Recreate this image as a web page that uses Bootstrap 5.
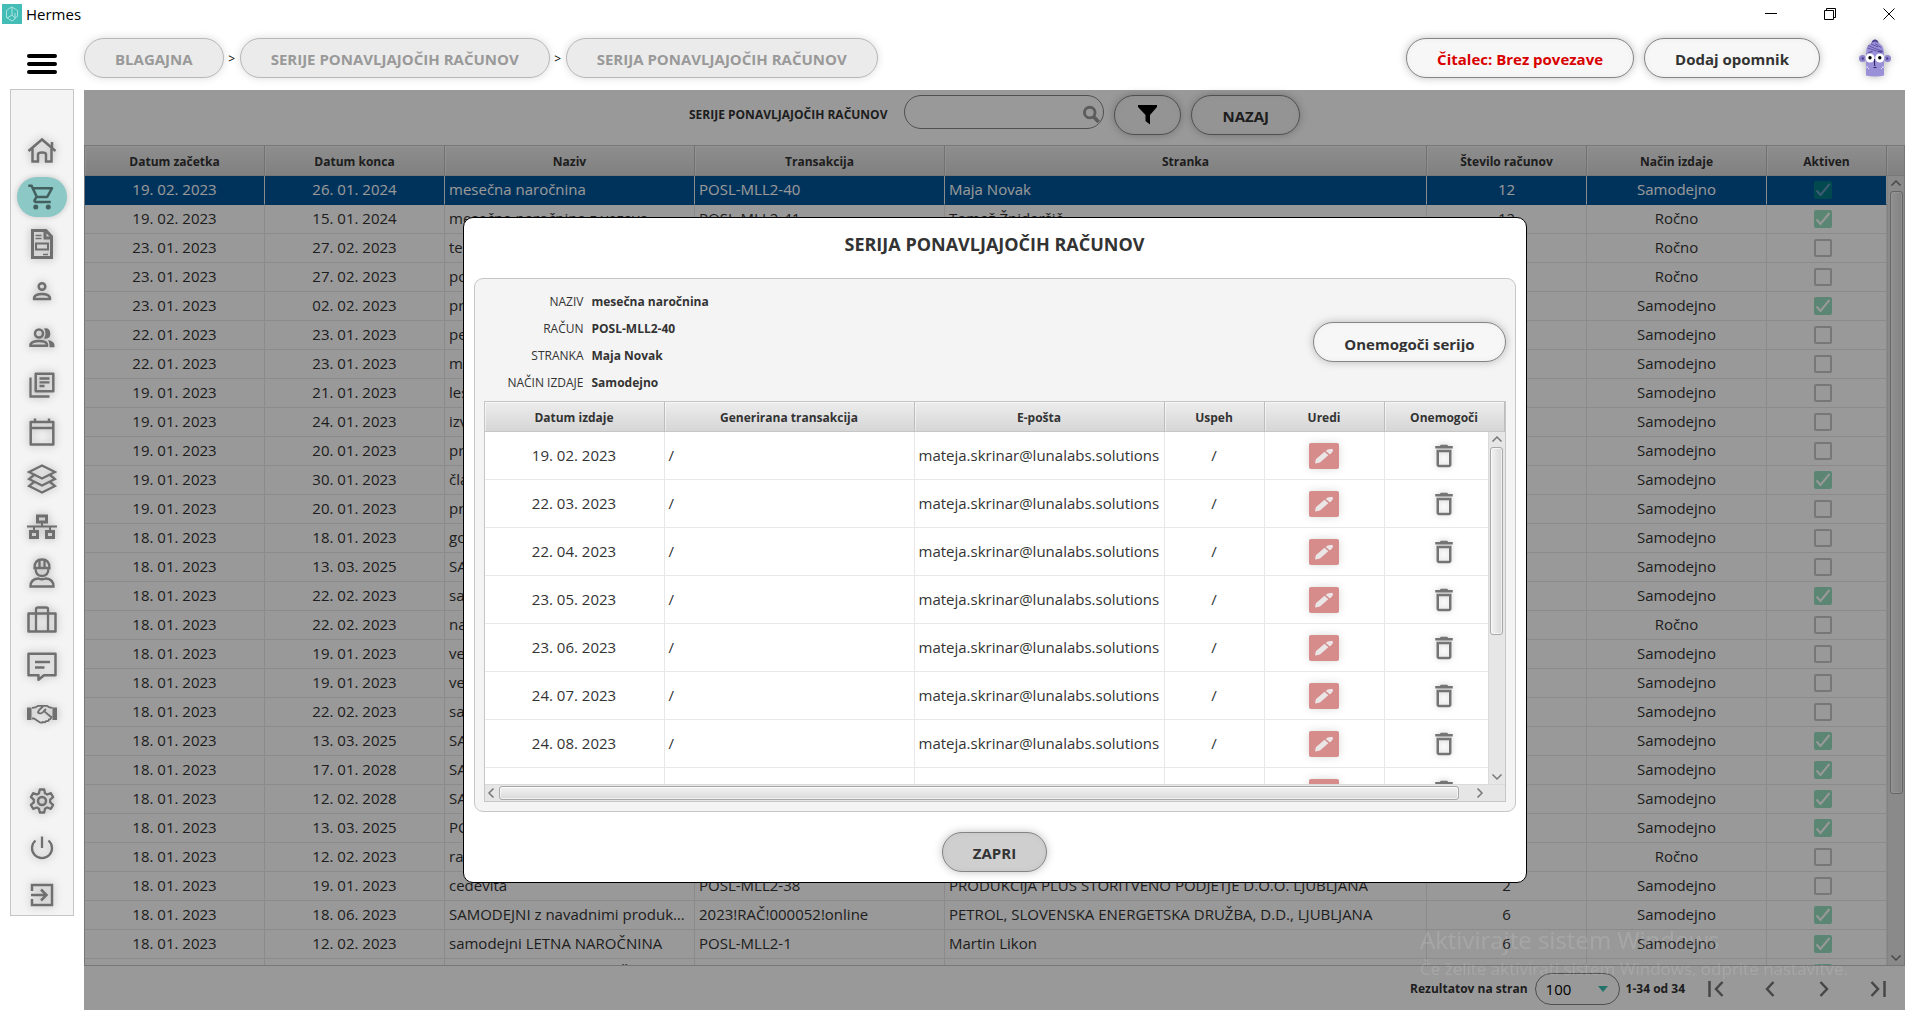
<!DOCTYPE html>
<html lang="sl">
<head>
<meta charset="utf-8">
<meta name="viewport" content="width=device-width, initial-scale=1">
<title>Hermes</title>
<link rel="stylesheet" href="https://cdn.jsdelivr.net/npm/bootstrap@5.3.0/dist/css/bootstrap.min.css">
<style>
:root { --line: #c6c6c6; --grid: #e8e8e8; --ink: #333; --icon: #6f6f6f; }
body { font-family: "Open Sans", "Noto Sans", sans-serif; font-size: 15px; line-height: 20px; color: var(--ink); background: #fff; }
.app-shell { height: 100vh; padding-bottom: 16px; }

/* window title bar */
.win-bar { height: 30px; padding: 0 0 2px 2px; color: #000; }
.win-tools { margin-right: -3px; }
.win-btn { width: 59px; height: 28px; border: 0; background: none; padding: 0; }

/* header */
.head-row { padding: 8px 10px 12px 0; }
.menu-col { width: 84px; flex: none; }
.menu-btn { display: block; border: 0; background: none; padding: 12px 0 0 0; margin-left: 27px; }
.pill { height: 40px; border: 1px solid #858585; border-radius: 20px; background: #f7f7f7; color: var(--ink); font-weight: 700; font-size: 15px; line-height: 20px; padding: 2px 30px 0; box-shadow: 0 0 9px rgba(0,0,0,.25), inset 0 0 6px rgba(0,0,0,.04); white-space: nowrap; }
.pill-off { border-color: #b8b8b8; background: #ebebeb; color: #999; box-shadow: 0 0 9px rgba(0,0,0,.14); }
.pill-alert { color: #d90000; }
.pill-grey { background: #cfcfcf; }
.pill-icon { padding: 0 23px; }
.crumb-sep { width: 16px; text-align: center; font-size: 12px; padding-top: 2px; color: #000; }
.head-tools { gap: 10px; }
.avatar-btn { border: 0; background: none; padding: 0; margin: 0 14px 0 29px; filter: drop-shadow(0 0 4px rgba(0,0,0,.3)); }

/* side menu */
.side-nav { width: 64px; margin: -1px 10px 0; padding-top: 36px; border: 1px solid var(--line); background: #f4f4f4; flex: none; }
.side-link { height: 47px; color: var(--icon); }
.side-link:last-child { margin-bottom: -3px; }
.side-link svg { filter: drop-shadow(0 0 4px rgba(0,0,0,.3)); }
.side-link.is-on span { width: 50px; height: 40px; border-radius: 20px; background: #8bc8c6; color: #43605f; box-shadow: 0 0 6px rgba(0,0,0,.2); }
.side-link.is-on svg { filter: none; }
.side-gap { margin-top: 40px; }

/* main pane */
.pane { background: #fff; min-width: 0; margin-right: 10px; }
.pane-tools { height: 55px; padding-top: 5px; gap: 10px; }
.small-bold { font-size: 12px; font-weight: 700; }
.pane-tools .small-bold { line-height: 40px; margin-right: 7px; }
.find-box { width: 200px; height: 34px; border: 1px solid #858585; border-radius: 17px; overflow: hidden; padding: 0 2px 0 12px; }
.find-box input { border: 0; background: none; min-width: 0; outline: 0; }
.grid-area { border: 1px solid var(--line); min-height: 0; }
.grid-tbl { width: 100%; table-layout: fixed; border-collapse: separate; border-spacing: 0; }
.grid-tbl th { height: 30px; padding: 2px 0 0; text-align: center; font-size: 12px; line-height: 16px; border-right: 1px solid #bdbdbd; border-bottom: 1px solid var(--line); background: linear-gradient(#ededed, #d6d6d6); box-shadow: inset 1px 1px 0 rgba(255,255,255,.5); }
.grid-tbl td { padding: 0 4px 2px; border-right: 1px solid var(--grid); border-bottom: 1px solid var(--grid); white-space: nowrap; overflow: hidden; text-overflow: ellipsis; text-align: center; }
.grid-tbl td.txt { text-align: left; }
.main-tbl td { height: 29px; }
.main-tbl td:last-child { padding: 0 12px 0 4px; }
.main-tbl tr.picked td { background: #00569a; border-bottom-color: #00569a; color: #fff; }
.main-tbl .form-check-input { display: block; width: 18px; height: 18px; margin: 0 auto; border: 2px solid #707070; border-radius: 2px; background-color: transparent; opacity: .4; }
.main-tbl .form-check-input:checked { border-color: #05b365; background-color: #05b365; background-size: 18px; background-position: center; background-image: url("data:image/svg+xml,%3Csvg xmlns='http://www.w3.org/2000/svg' viewBox='0 0 18 18'%3E%3Cpath d='M2.5 9.5l4 4.5 9-11' fill='none' stroke='%23fff' stroke-width='2'/%3E%3C/svg%3E"); }

/* scroll bars */
.vbar { position: absolute; right: 0; width: 17px; background: #e6e6e6; border-left: 1px solid #dadada; padding: 3px 2px; color: #777; }
.hbar { height: 17px; background: #e6e6e6; border-top: 1px solid #dadada; color: #777; padding: 1px 17px 1px 2px; }
.bar-thumb { border: 1px solid #a8a8a8; border-radius: 3px; box-shadow: inset 0 0 0 1px rgba(255,255,255,.6); }
.vbar .bar-thumb { width: 13px; background: linear-gradient(90deg, #f2f2f2, #d9d9d9); }
.hbar .bar-thumb { height: 14px; background: linear-gradient(#f2f2f2, #d9d9d9); }
.main-bar { top: 30px; bottom: 0; }
.main-bar .bar-thumb { height: 77%; }
.dlg-bar { top: 30px; bottom: 0; }
.dlg-bar .bar-thumb { height: 188px; }

.pane-foot { height: 44px; padding-top: 2px; }
.page-size { width: 85px; height: 32px; margin: 0 6px 0 7px; border: 1px solid #858585; border-radius: 16px; appearance: none; padding: 0 10px; color: #000; background: transparent url("data:image/svg+xml,%3Csvg xmlns='http://www.w3.org/2000/svg' viewBox='0 0 10 6'%3E%3Cpath d='M0 0h10L5 6z' fill='%233fbfb1'/%3E%3C/svg%3E") no-repeat right 11px center / 10px 6px; }
.pager-btn { width: 54px; height: 32px; border: 0; background: none; padding: 0; color: #777; }

/* dialog */
.shade { background: rgba(0,0,0,.4); }
.dlg { width: 1064px; max-width: 100%; border: 1px solid #000; border-radius: 10px; background: #fff; padding: 0 10px 10px; }
.dlg-title { font-size: 18px; line-height: 24px; font-weight: 700; text-align: center; padding: 14px 0 22px; margin: 0; }
.dlg-body { border: 1px solid var(--line); border-radius: 9px; background: #f4f4f4; padding: 9px; }
.facts-row { margin-bottom: 5px; }
.facts { display: grid; grid-template-columns: 100px auto; grid-auto-rows: 27px; column-gap: 8px; font-size: 12px; line-height: 28px; margin: 0; }
.facts dt { font-weight: 400; text-align: right; }
.facts dd { font-weight: 700; margin: 0; }
.cut-text { display: block; height: 17px; line-height: 18px; overflow: hidden; }
.dlg-grid { border: 1px solid var(--line); background: #fff; }
.dlg-view { height: 382px; overflow: hidden; }
.dlg-tbl td { height: 48px; }
.edit-btn { width: 30px; height: 26px; border: 0; border-radius: 2px; background: #d58c8b; color: #ebe6e6; padding: 0; box-shadow: 0 0 8px rgba(0,0,0,.15); }
.bin-btn { border: 0; background: none; padding: 0; color: #747474; }
.bin-btn svg { filter: drop-shadow(0 0 3px rgba(0,0,0,.2)); }
.dlg-foot { padding-top: 20px; }

.os-note { position: fixed; left: 1420px; bottom: 43px; color: rgba(255,255,255,.13); pointer-events: none; z-index: 5; white-space: nowrap; }
.os-note-big { font-size: 24px; line-height: 30px; }
.os-note-sub { font-size: 17px; line-height: 28px; }
svg { display: block; }
</style>
<script src="https://cdn.jsdelivr.net/npm/bootstrap@5.3.0/dist/js/bootstrap.bundle.min.js"></script>
</head>
<body>
<svg width="0" height="0" class="position-absolute" aria-hidden="true">
  <symbol id="i-bin" viewBox="0 0 24 24"><path fill="currentColor" d="M6 19c0 1.100.9 2 2 2h8c1.100 0 2-.9 2-2V7H6v12zM8 9h8v10H8V9zm7.500-5l-1-1h-5l-1 1H5v2h14V4z"/></symbol>
  <symbol id="i-pen" viewBox="0 0 30 26"><path fill="currentColor" d="M6 20.500l.8-4.300L15.500 8.800l3.800 3.500-8.300 7.200zM16.800 8l1.400-1.200q2-1.200 4.800-.8 2 1 .3 3L21 11.500z"/></symbol>
  <symbol id="i-up" viewBox="0 0 12 8"><path fill="none" stroke="currentColor" stroke-width="1.500" d="M1.500 6.500L6 2l4.500 4.500"/></symbol>
</svg>

<div class="app-shell d-flex flex-column">
  <div class="win-bar d-flex align-items-center flex-shrink-0 overflow-hidden">
    <svg width="20" height="20" viewBox="0 0 20 20" aria-hidden="true"><rect width="20" height="20" fill="#45bdb7"/><g fill="none" stroke="#a9e3df" stroke-width="1"><path d="M7 4.500L10 3l5.500 3.500v6L13 14M7 4.500L4.500 6.500v7L10 17l3-2V9M10 3v8l-5 3M10 11l3 3"/></g></svg>
    <span class="ms-1">Hermes</span>
    <div class="win-tools ms-auto d-flex">
      <button class="win-btn" type="button" aria-label="Pomanjšaj"><svg class="mx-auto" width="12" height="12" viewBox="0 0 12 12"><path d="M0 5.500h12" stroke="#000"/></svg></button>
      <button class="win-btn" type="button" aria-label="Obnovi"><svg class="mx-auto" width="12" height="12" viewBox="0 0 12 12"><path d="M.5 2.500h9v9h-9zM2.500 2.500v-2h9v9h-2" fill="none" stroke="#000"/></svg></button>
      <button class="win-btn" type="button" aria-label="Zapri okno"><svg class="mx-auto" width="12" height="12" viewBox="0 0 12 12"><path d="M.5.5l11 11m0-11l-11 11" stroke="#000"/></svg></button>
    </div>
  </div>

  <header class="head-row d-flex align-items-center flex-shrink-0">
    <div class="menu-col">
      <button class="menu-btn" type="button" aria-label="Meni"><svg width="30" height="20" viewBox="0 0 30 20"><path d="M2 2h26M2 10h26M2 18h26" stroke="#000" stroke-width="4" stroke-linecap="round"/></svg></button>
    </div>
    <nav class="d-flex align-items-center" aria-label="Pot">
      <button class="pill pill-off" type="button">BLAGAJNA</button><span class="crumb-sep">&gt;</span>
      <button class="pill pill-off" type="button">SERIJE PONAVLJAJOČIH RAČUNOV</button><span class="crumb-sep">&gt;</span>
      <button class="pill pill-off" type="button">SERIJA PONAVLJAJOČIH RAČUNOV</button>
    </nav>
    <div class="head-tools ms-auto d-flex align-items-center">
      <button class="pill pill-alert" type="button">Čitalec: Brez povezave</button>
      <button class="pill" type="button">Dodaj opomnik</button>
      <button class="avatar-btn" type="button" aria-label="Profil">
        <svg width="32" height="38" viewBox="0 0 32 38"><path d="M12.500 4q0-2.500 3.500-3.800Q19.500 1.500 19.500 4z" fill="#4a3f8c"/><path d="M7 36.500V14.500Q7 4.500 16 2.500q9 2 9 12v22q-9 2-18 0z" fill="#9a90d8"/><path d="M9 6.500l7 3 8 3M8.500 9l9 3 6 .5M12 5l7 3M16 4.500l6 4" stroke="#5a4fa0" stroke-width=".9" fill="none"/><path d="M9.500 13.500l4-1M19 12.500l4 1" stroke="#4a3f8c"/><circle cx="3.500" cy="19.500" r="3.500" fill="#8d83cf"/><circle cx="28.500" cy="19.500" r="3.500" fill="#8d83cf"/><circle cx="3.800" cy="19.500" r="1.200" fill="#4a3f8c"/><circle cx="28.200" cy="19.500" r="1.200" fill="#4a3f8c"/><circle cx="11" cy="19" r="4.500" fill="#fff"/><circle cx="20.800" cy="19" r="4.500" fill="#fff"/><circle cx="11" cy="18.800" r="1.700" fill="#000"/><circle cx="20.800" cy="18.800" r="1.700" fill="#000"/><path d="M15.500 20v6.500h1M14.500 28.500h3" stroke="#2d2660" fill="none"/><path d="M8 27v2M24 27v2M9.500 29v1M22.500 29v1" stroke="#e8e5ff"/></svg>
      </button>
    </div>
  </header>

  <div class="d-flex flex-fill" style="min-height:0">
    <nav class="side-nav align-self-start" id="side" aria-label="Glavni meni"></nav>

    <main class="pane flex-fill d-flex flex-column position-relative" id="pane">
      <div class="pane-tools d-flex justify-content-center align-items-start flex-shrink-0">
        <label class="small-bold" for="find">SERIJE PONAVLJAJOČIH RAČUNOV</label>
        <div class="find-box d-flex align-items-end">
          <input id="find" class="flex-fill h-100" type="search">
          <svg width="24" height="26" viewBox="0 0 24 26" aria-hidden="true"><circle cx="9.500" cy="10" r="6.500" fill="none" stroke="#999" stroke-width="3.500"/><path d="M14 15l6.500 6.500" stroke="#999" stroke-width="4.500"/></svg>
        </div>
        <button class="pill pill-icon" type="button" aria-label="Filter"><svg width="19" height="20" viewBox="0 0 19 20"><path d="M0 0h19v2l-7 8v9.500L7.500 16v-6L0 2z"/></svg></button>
        <button class="pill" type="button">NAZAJ</button>
      </div>

      <div class="grid-area flex-fill position-relative overflow-hidden">
        <table class="grid-tbl main-tbl">
          <colgroup><col style="width:180px"><col style="width:180px"><col style="width:250px"><col style="width:250px"><col><col style="width:160px"><col style="width:180px"><col style="width:120px"><col style="width:17px"></colgroup>
          <thead><tr><th>Datum začetka</th><th>Datum konca</th><th>Naziv</th><th>Transakcija</th><th>Stranka</th><th>Število računov</th><th>Način izdaje</th><th>Aktiven</th><th class="border-end-0"></th></tr></thead>
          <tbody id="mainRows"></tbody>
        </table>
        <div class="vbar main-bar d-flex flex-column align-items-center">
          <svg class="mb-1" width="12" height="8"><use href="#i-up"/></svg>
          <div class="bar-thumb"></div>
          <svg class="mt-auto" width="12" height="8" viewBox="0 0 12 8"><path fill="none" stroke="currentColor" stroke-width="1.500" d="M1.500 1.500L6 6l4.500-4.500"/></svg>
        </div>
      </div>

      <div class="pane-foot d-flex align-items-center justify-content-end flex-shrink-0">
        <label class="small-bold" for="size">Rezultatov na stran</label>
        <select class="page-size" id="size"><option>100</option></select>
        <span class="small-bold me-1">1-34 od 34</span>
        <button class="pager-btn" type="button" aria-label="Prva stran"><svg class="mx-auto" width="16" height="16" viewBox="0 0 16 16"><path d="M1.500 0v16M14.500 1L8 8l6.500 7" fill="none" stroke="currentColor" stroke-width="2.500"/></svg></button>
        <button class="pager-btn" type="button" aria-label="Prejšnja stran"><svg class="mx-auto" width="10" height="16" viewBox="0 0 10 16"><path d="M8.500 1L2 8l6.500 7" fill="none" stroke="currentColor" stroke-width="2.500"/></svg></button>
        <button class="pager-btn" type="button" aria-label="Naslednja stran"><svg class="mx-auto" width="10" height="16" viewBox="0 0 10 16"><path d="M1.500 1L8 8l-6.500 7" fill="none" stroke="currentColor" stroke-width="2.500"/></svg></button>
        <button class="pager-btn" type="button" aria-label="Zadnja stran"><svg class="mx-auto" width="16" height="16" viewBox="0 0 16 16"><path d="M14.500 0v16M1.500 1L8 8l-6.500 7" fill="none" stroke="currentColor" stroke-width="2.500"/></svg></button>
      </div>

      <div class="shade position-absolute top-0 start-0 w-100 h-100 d-flex align-items-center justify-content-center">
        <section class="dlg" role="dialog" aria-labelledby="dlgTitle">
          <h1 class="dlg-title" id="dlgTitle">SERIJA PONAVLJAJOČIH RAČUNOV</h1>
          <div class="dlg-body">
            <div class="facts-row d-flex align-items-center justify-content-between">
              <dl class="facts">
                <dt>NAZIV</dt><dd>mesečna naročnina</dd>
                <dt>RAČUN</dt><dd>POSL-MLL2-40</dd>
                <dt>STRANKA</dt><dd>Maja Novak</dd>
                <dt>NAČIN IZDAJE</dt><dd>Samodejno</dd>
              </dl>
              <button class="pill" type="button"><span class="cut-text">Onemogoči serijo</span></button>
            </div>
            <div class="dlg-grid">
              <div class="dlg-view position-relative">
                <table class="grid-tbl dlg-tbl">
                  <colgroup><col style="width:180px"><col style="width:250px"><col style="width:250px"><col style="width:100px"><col style="width:120px"><col></colgroup>
                  <thead><tr><th>Datum izdaje</th><th>Generirana transakcija</th><th>E-pošta</th><th>Uspeh</th><th>Uredi</th><th>Onemogoči</th></tr></thead>
                  <tbody id="dlgRows"></tbody>
                </table>
                <div class="vbar dlg-bar d-flex flex-column align-items-center">
                  <svg class="mb-1" width="12" height="8"><use href="#i-up"/></svg>
                  <div class="bar-thumb"></div>
                  <svg class="mt-auto" width="12" height="8" viewBox="0 0 12 8"><path fill="none" stroke="currentColor" stroke-width="1.500" d="M1.500 1.500L6 6l4.500-4.500"/></svg>
                </div>
              </div>
              <div class="hbar d-flex align-items-center">
                <svg class="me-1" width="8" height="12" viewBox="0 0 8 12"><path fill="none" stroke="currentColor" stroke-width="1.500" d="M6.500 1.500L2 6l4.500 4.500"/></svg>
                <div class="bar-thumb" style="width:96%"></div>
                <svg class="ms-auto me-1" width="8" height="12" viewBox="0 0 8 12"><path fill="none" stroke="currentColor" stroke-width="1.500" d="M1.500 1.500L6 6l-4.500 4.500"/></svg>
              </div>
            </div>
          </div>
          <div class="dlg-foot text-center"><button class="pill pill-grey" type="button">ZAPRI</button></div>
        </section>
      </div>
    </main>
  </div>
</div>

<div class="os-note" aria-hidden="true">
  <div class="os-note-big">Aktivirajte sistem Windows</div>
  <div class="os-note-sub">Če želite aktivirati sistem Windows, odprite nastavitve.</div>
</div>

<script>
// side menu: label and drawing (30 x 30 box, stroked)
const side = [
  ['Domov', '<path d="M1.500 16L15 4.500 28.500 16M25 13V7M5.500 13.500v13H11v-7q0-2 4-2t4 2v7h5.500v-13"/>'],
  ['Blagajna', '<path fill="currentColor" stroke="none" transform="scale(1.250)" d="M15.550 13c.75 0 1.410-.41 1.750-1.030l3.580-6.490A.996.996 0 0020.010 4H5.210l-.94-2H1v2h2l3.600 7.590-1.350 2.440C4.520 15.370 5.480 17 7 17h12v-2H7l1.100-2h7.450zM6.160 6h12.150l-2.760 5H8.530L6.160 6zM7 18a2 2 0 100 4 2 2 0 000-4zm10 0a2 2 0 100 4 2 2 0 000-4z"/>'],
  ['Računi', '<path stroke-width="3" d="M5.500 1.500h13.500l5.500 6v21h-19zM18 2v7h6.500"/><path stroke-width="1.500" d="M8.500 6.500h6M8.500 9.500h6M16 25.500h5"/><path stroke-width="2" d="M9 14.500h12v6H9z"/>'],
  ['Stranka', '<circle cx="15" cy="10.500" r="3.300"/><path d="M7.100 22.900v-1.500q1.500-3.300 7.900-3.300t7.900 3.300v1.500z"/>'],
  ['Skupine', '<circle cx="12" cy="10.500" r="4"/><path d="M3.500 22.800v-1.500q1.500-3.300 8.500-3.300t8 3.300v1.500z"/><path fill="currentColor" stroke="none" d="M17 5.500q6-1 6.300 5t-6.300 5q3-5 0-10zM21 17q6.500 1 6.500 5.500v1.700h-5v-2q0-3-1.500-5.200z"/>'],
  ['Katalog', '<path stroke-width="2.500" d="M8.700 3.700h17.600v17.600H8.700z" stroke-linejoin="round"/><path stroke-width="2.300" d="M3.500 7.500v19h19M12.500 8.500h10M12.500 12.300h10M12.500 16h5"/>'],
  ['Koledar', '<path stroke-width="2.500" stroke-linejoin="round" d="M3.700 5h22.600v22.500H3.700zM3.700 11h22.600M8 1.500V5M22 1.500V5"/>'],
  ['Zaloga', '<path stroke-width="2.300" d="M15 1.500l13 6.500-13 6.500L2 8zM7 11l-5 4 13 6.500L28 15l-5-4M7 18l-5 4 13 6.500L28 22l-5-4"/>'],
  ['Organizacija', '<path stroke-width="2" d="M0 15.500h30M15 11v4M7 16v4M23 16v4"/><path stroke-width="3" d="M10.500 5h9v6h-9zM3.500 20.500h7v6h-7zM19.500 20.500h7v6h-7z"/>'],
  ['Delavci', '<path stroke-width="2.300" d="M7.500 10q0-8.500 7.500-8.500T22.500 10zM12.500 9V3M17.500 9V3M8.500 10q0 8 6.500 8t6.500-8M3.500 28.500q0-7.500 8-8 3.500 1.500 7 0 8 .5 8 8z"/>'],
  ['Poslovanje', '<path stroke-width="2.500" stroke-linejoin="round" d="M1.500 8.500h27v18h-27z"/><path stroke-width="2.300" d="M9 26V4q0-1.500 2-1.500h8q2 0 2 1.500v22"/>'],
  ['Sporočila', '<path stroke-width="2.500" stroke-linejoin="round" d="M1.500 1.800h27v21.500H17l-5.500 4.500v-4.500h-10z"/><path stroke-width="2.500" d="M8 10h15M8 15.500h9.500"/>'],
  ['Partnerji', '<path fill="currentColor" stroke="none" d="M0 8.500h4.500V21H0zM25.500 8.500H30V21h-4.500z"/><path stroke-width="1.800" d="M5 8.800q4 0 6-2h9q2 2 5.500 2M5 19.500h2l6 4q2 .5 3-.5 2 .8 3-.8 3 .2 3-1.700 2.500-.2 2-2.500l1.500-.5M24 18l-7-6q-3 4-6 1.500 0-2 5-6M17 12l2-2"/>'],
  ['Nastavitve', '<circle cx="15" cy="15" r="4"/><path stroke-width="2.300" stroke-linejoin="round" d="M12.800 3.500h4.400l.8 3.800 2.200 1.200 3.700-1.300 2.200 3.900-2.900 2.500v2.800l2.900 2.500-2.200 3.900-3.700-1.300-2.200 1.200-.8 3.800h-4.400l-.8-3.800-2.200-1.200-3.700 1.300-2.200-3.900 2.900-2.500v-2.800l-2.900-2.500 2.200-3.900 3.700 1.300L12 7.300z"/>'],
  ['Izklop', '<path stroke-width="2.300" d="M15 3.500V15M8.500 7.500a10 10 0 1013 0"/>'],
  ['Odjava', '<path stroke-width="2.500" d="M5 11V5h20v20H5v-6M4 15h14.500M14 9.500l5.500 5.500-5.500 5.500"/>']
];
document.getElementById('side').innerHTML = side.map(([name, art], i) =>
  `<a href="#" aria-label="${name}" class="side-link d-flex align-items-center justify-content-center${i === 1 ? ' is-on' : ''}${i === 13 ? ' side-gap' : ''}"><span class="d-flex align-items-center justify-content-center"><svg width="30" height="30" viewBox="0 0 30 30" fill="none" stroke="currentColor" stroke-width="2.500">${art}</svg></span></a>`).join('');

const S = 'Samodejno', R = 'Ročno';
const rows = [
  ['19. 02. 2023', '26. 01. 2024', 'mesečna naročnina', 'POSL-MLL2-40', 'Maja Novak', 12, S, 1],
  ['19. 02. 2023', '15. 01. 2024', 'mesečna naročnina z vezavo', 'POSL-MLL2-41', 'Tomaž Žnidaršič', 12, R, 1],
  ['23. 01. 2023', '27. 02. 2023', 'te', '', '', '', R, 0],
  ['23. 01. 2023', '27. 02. 2023', 'po', '', '', '', R, 0],
  ['23. 01. 2023', '02. 02. 2023', 'pr', '', '', '', S, 1],
  ['22. 01. 2023', '23. 01. 2023', 'pe', '', '', '', S, 0],
  ['22. 01. 2023', '23. 01. 2023', 'm', '', '', '', S, 0],
  ['19. 01. 2023', '21. 01. 2023', 'les', '', '', '', S, 0],
  ['19. 01. 2023', '24. 01. 2023', 'izv', '', '', '', S, 0],
  ['19. 01. 2023', '20. 01. 2023', 'pr', '', '', '', S, 0],
  ['19. 01. 2023', '30. 01. 2023', 'čla', '', '', '', S, 1],
  ['19. 01. 2023', '20. 01. 2023', 'pr', '', '', '', S, 0],
  ['18. 01. 2023', '18. 01. 2023', 'go', '', '', '', S, 0],
  ['18. 01. 2023', '13. 03. 2025', 'SA', '', '', '', S, 0],
  ['18. 01. 2023', '22. 02. 2023', 'sa', '', '', '', S, 1],
  ['18. 01. 2023', '22. 02. 2023', 'na', '', '', '', R, 0],
  ['18. 01. 2023', '19. 01. 2023', 've', '', '', '', S, 0],
  ['18. 01. 2023', '19. 01. 2023', 've', '', '', '', S, 0],
  ['18. 01. 2023', '22. 02. 2023', 'sa', '', '', '', S, 0],
  ['18. 01. 2023', '13. 03. 2025', 'SA', '', '', '', S, 1],
  ['18. 01. 2023', '17. 01. 2028', 'SA', '', '', '', S, 1],
  ['18. 01. 2023', '12. 02. 2028', 'SA', '', '', '', S, 1],
  ['18. 01. 2023', '13. 03. 2025', 'PO', '', '', '', S, 1],
  ['18. 01. 2023', '12. 02. 2023', 'ra', '', '', '', R, 0],
  ['18. 01. 2023', '19. 01. 2023', 'cedevita', 'POSL-MLL2-38', 'PRODUKCIJA PLUS STORITVENO PODJETJE D.O.O. LJUBLJANA', 2, S, 0],
  ['18. 01. 2023', '18. 06. 2023', 'SAMODEJNI z navadnimi produkti in popusti', '2023!RAČ!000052!online', 'PETROL, SLOVENSKA ENERGETSKA DRUŽBA, D.D., LJUBLJANA', 6, S, 1],
  ['18. 01. 2023', '12. 02. 2023', 'samodejni LETNA NAROČNINA', 'POSL-MLL2-1', 'Martin Likon', 6, S, 1],
  ['18. 01. 2023', '12. 02. 2023', 'samodejni MESEC NAROČNINA', '', '', '', S, 1]
];
document.getElementById('mainRows').innerHTML = rows.map((r, i) =>
  `<tr${i ? '' : ' class="picked"'}><td>${r[0]}</td><td>${r[1]}</td><td class="txt">${r[2]}</td><td class="txt">${r[3]}</td><td class="txt">${r[4]}</td><td>${r[5]}</td><td>${r[6]}</td><td><input class="form-check-input" type="checkbox" aria-label="Aktiven" disabled${r[7] ? ' checked' : ''}></td></tr>`).join('');

const dates = ['19. 02. 2023', '22. 03. 2023', '22. 04. 2023', '23. 05. 2023', '23. 06. 2023', '24. 07. 2023', '24. 08. 2023', '24. 09. 2023'];
document.getElementById('dlgRows').innerHTML = dates.map(d =>
  `<tr><td>${d}</td><td class="txt">/</td><td class="txt">mateja.skrinar@lunalabs.solutions</td><td>/</td><td class="pb-0"><button class="edit-btn d-block mx-auto" type="button" aria-label="Uredi"><svg width="30" height="26"><use href="#i-pen"/></svg></button></td><td class="pb-0"><button class="bin-btn d-block mx-auto" type="button" aria-label="Onemogoči"><svg width="30" height="30"><use href="#i-bin"/></svg></button></td></tr>`).join('');
</script>
</body>
</html>
